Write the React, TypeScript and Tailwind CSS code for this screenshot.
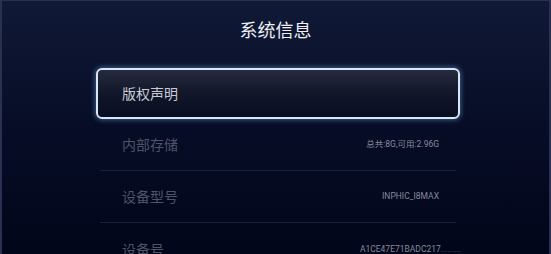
import React from "react"

const rows = [
  { label: "内部存储", value: "总共:8G,可用:2.96G" },
  { label: "设备型号", value: "INPHIC_I8MAX" },
  { label: "设备号", value: "A1CE47E71BADC217", more: true },
]

export default function App() {
  return (
    <div
      className="relative h-[254px] w-[551px] overflow-hidden border-l-2 border-t border-r-2 border-[#2a3150] bg-gradient-to-b from-[#101936] via-[#070d26] to-[#02061a]"
      style={{ fontFamily: '"Noto Sans CJK SC", "Noto Sans", Roboto, sans-serif' }}
    >
      <div className="h-[67px] pt-[16px] text-center text-[18px] leading-[24px] text-[#eef0f5]">
        系统信息
      </div>

      <div className="ml-[94px] w-[364px]">
        <div className="flex h-[51px] items-center rounded-[6px] border-2 border-[#d8e7f4] bg-gradient-to-b from-[#262a3e] via-[#121629] to-[#080d22] pl-[24px] text-[14px] text-[#c9ccd6] shadow-[0_0_5px_1px_rgba(110,170,225,0.5)]">
          版权声明
        </div>

        {rows.map((row, i) => (
          <div
            key={row.label}
            className={
              i < rows.length - 1
                ? "mx-[4px] flex h-[52px] items-center justify-between border-b border-[#1a2038] pl-[22px] pr-[17px]"
                : "mx-[4px] flex h-[52px] items-center justify-between pl-[22px] pr-[17px]"
            }
          >
            <span className="text-[14px] text-[#4e5469]">{row.label}</span>
            <span
              className={
                row.more
                  ? "-mr-[22px] whitespace-nowrap text-[8.5px] text-[#868b9c]"
                  : "whitespace-nowrap text-[8.5px] text-[#868b9c]"
              }
              style={{ fontFamily: 'Roboto, "Noto Sans CJK SC", sans-serif' }}
            >
              {row.value}
              {row.more && <span className="text-[#535870]">.........</span>}
            </span>
          </div>
        ))}
      </div>
    </div>
  )
}
